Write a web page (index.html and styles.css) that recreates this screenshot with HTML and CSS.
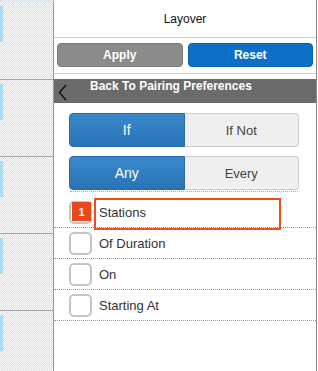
FILE: index.html
```html
<!DOCTYPE html>
<html lang="en">
<head>
  <meta charset="UTF-8" />
  <title>Layover</title>
  <link rel="stylesheet" href="styles.css">
</head>
<body>

<div class="page">
  <div class="sidebar">
    <div class="side-row first"><span class="strip"></span></div>
    <div class="side-row"><span class="strip"></span></div>
    <div class="side-row"><span class="strip"></span></div>
    <div class="side-row"><span class="strip"></span></div>
    <div class="side-row"><span class="strip"></span></div>
  </div>

  <div class="panel">
    <div class="title">Layover</div>

    <div class="actions">
      <button class="btn apply">Apply</button>
      <button class="btn reset">Reset</button>
    </div>

    <div class="back-bar">
      <svg class="chevron" width="10" height="17" viewBox="0 0 10 17">
        <polyline points="8,1 1.5,8.5 8,16" fill="none" stroke="#111" stroke-width="1.4"/>
      </svg>
      <span>Back To Pairing Preferences</span>
    </div>

    <div class="segment">
      <button class="seg active">If</button>
      <button class="seg">If Not</button>
    </div>
    <div class="segment">
      <button class="seg active">Any</button>
      <button class="seg">Every</button>
    </div>

    <div class="divider"></div>

    <ul class="options">
      <li class="option">
        <span class="check"></span>
        <span class="label">Stations</span>
        <span class="badge">1</span>
        <span class="highlight"></span>
      </li>
      <li class="option">
        <span class="check"></span>
        <span class="label">Of Duration</span>
      </li>
      <li class="option">
        <span class="check"></span>
        <span class="label">On</span>
      </li>
      <li class="option">
        <span class="check"></span>
        <span class="label">Starting At</span>
      </li>
    </ul>
  </div>
</div>

</body>
</html>
```

FILE: styles.css
```css
* { margin: 0; padding: 0; box-sizing: border-box; font-family: 'Liberation Sans', Arial, sans-serif; }
body { width: 318px; height: 371px; overflow: hidden; background: #fff; }
.page { display: flex; height: 371px; }

.sidebar {
  width: 54px; border-right: 1px solid #9a9a9a;
  background: repeating-conic-gradient(#dcdcdc 0 25%, #fdfdfd 0 50%) 0 0 / 2px 2px;
  border-top: 2px dotted #c6e6fb;
}
.side-row {
  height: 77px; border-bottom: 1px solid #a8a8a8;
  position: relative;
}
.side-row.first { height: 78px; }
.strip {
  position: absolute; left: 0; top: 4px;
  width: 3px; height: 36px; background: #a9daf8;
}

.panel {
  width: 263px; border-right: 1px solid #8a8a8a;
  display: flex; flex-direction: column;
}
.title {
  height: 38px; border-bottom: 1px solid #cfcfcf;
  display: flex; align-items: center; justify-content: center;
  font-size: 12px; color: #111;
}
.actions {
  display: flex; gap: 5px; padding: 5px 3px 6px 3px;
  border-bottom: 1px solid #cfcfcf; margin-bottom: 5px;
}
.btn {
  flex: 1; height: 24px; border-radius: 4px;
  color: #fff; font-size: 12px; font-weight: 700;
}
.btn.apply { background: #8b8b8b; border: 1px solid #7a7a7a; }
.btn.reset { background: #0b70c6; border: 1px solid #0a63b0; }

.back-bar {
  height: 24px; background: #6b6b6b;
  display: flex; align-items: flex-start;
  color: #fff; font-size: 12px; font-weight: 700;
  padding-left: 4px;
}
.chevron { margin-top: 5px; }
.back-bar span { margin-left: 22px; line-height: 14px; }

.segment {
  display: flex; margin: 10px 17px 0 15px; height: 34px;
}
.segment + .segment { margin-top: 9px; }
.seg {
  flex: 1; font-size: 13px; color: #444;
  background: #efefef; border: 1px solid #cdcdcd;
  border-left: none; border-radius: 0 4px 4px 0;
}
.seg.active {
  color: #fff; font-size: 14px; border: 1px solid #2a6aa8;
  background: linear-gradient(#3a88cc, #2a73b8);
  border-radius: 4px 0 0 4px;
}

.divider {
  margin: 1px 18px 0 16px; border-top: 1px dotted #aaa;
}
.options { list-style: none; margin-top: 5px; }
.option {
  height: 31px; border-bottom: 1px dotted #9a9a9a;
  display: flex; align-items: center; padding-left: 15px;
  position: relative;
}
.check {
  width: 23px; height: 23px; border: 2px solid #c4c4c4;
  border-radius: 5px; background: #fff;
}
.label { margin-left: 7px; font-size: 13px; color: #333; }
.badge {
  position: absolute; left: 18px; top: 5px;
  width: 19px; height: 19px; background: #e8481a;
  color: #fff; font-size: 11px; font-weight: 700;
  display: flex; align-items: center; justify-content: center;
}
.highlight {
  position: absolute; left: 40px; top: 1px;
  width: 187px; height: 32px; border: 2px solid #ec4f1c;
}
```
